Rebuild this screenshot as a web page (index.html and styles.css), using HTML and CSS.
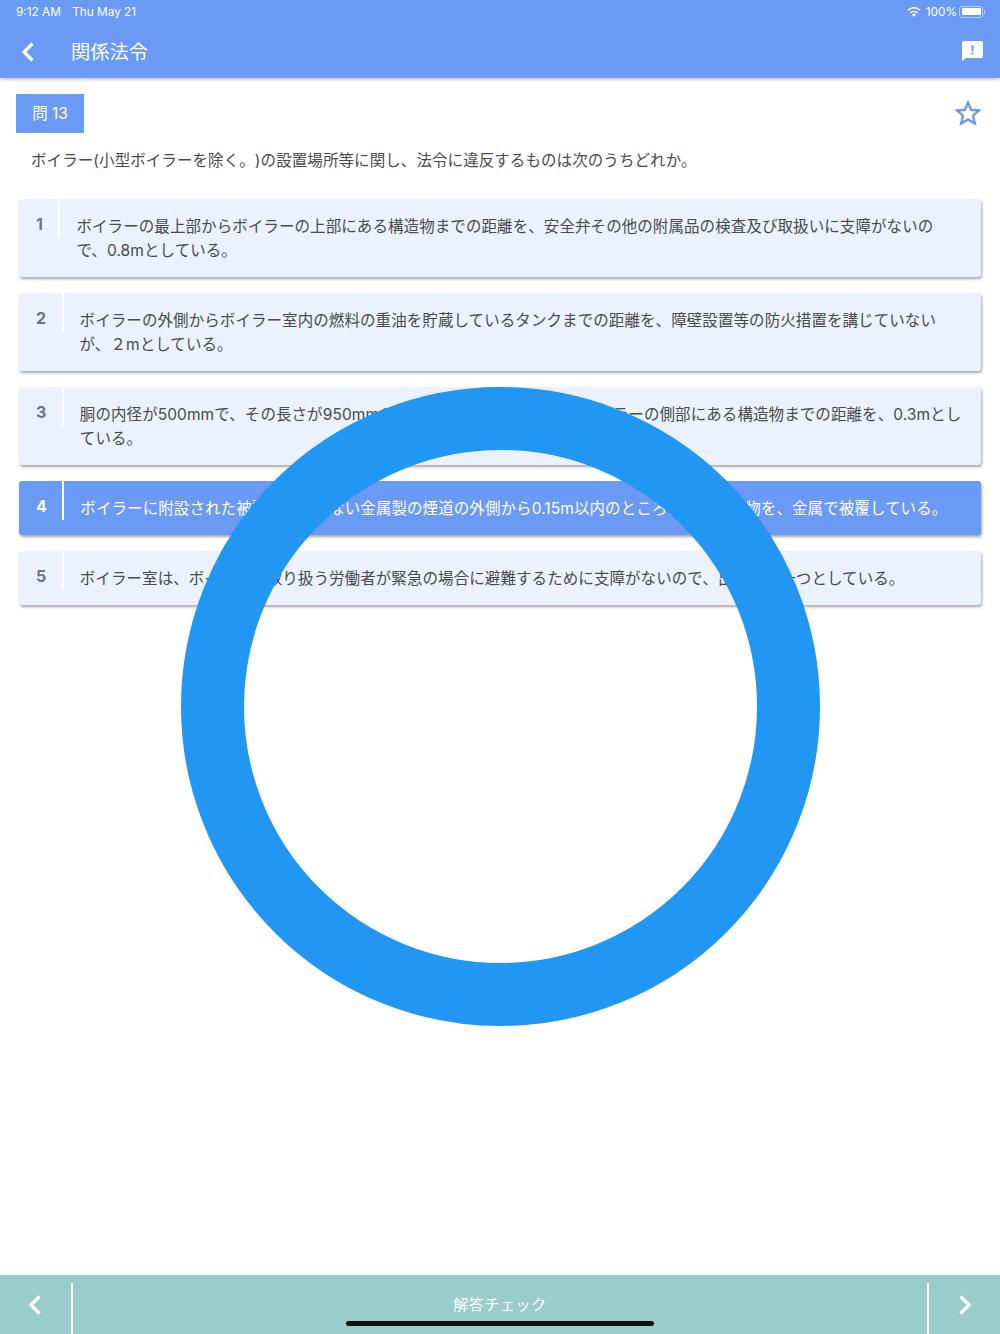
FILE: index.html
```html
<!DOCTYPE html>
<html lang="ja">
<head>
    <meta charset="UTF-8">
    <meta name="viewport" content="width=device-width, initial-scale=1.0">
    <title>関係法令</title>
    <link rel="stylesheet" href="styles.css">
</head>
<body>

    <header class="app-header">
        <div class="status-bar">
            <div class="status-left">
                <span>9:12 AM</span>
                <span>Thu May 21</span>
            </div>
            <div class="status-right">
                <svg class="wifi-icon" viewBox="0 0 14 11" width="14" height="11">
                    <path d="M7 11 4.9 8.6a3 3 0 0 1 4.2 0z" fill="#fff"/>
                    <path d="M3.4 6.9a5.2 5.2 0 0 1 7.2 0M1 4.3a8.6 8.6 0 0 1 12 0" fill="none" stroke="#fff" stroke-width="1.5"/>
                </svg>
                <span>100%</span>
                <div class="battery"><div class="battery-level"></div></div>
                <div class="battery-tip"></div>
            </div>
        </div>
        <div class="nav-bar">
            <svg class="nav-back" viewBox="0 0 14 20" width="14" height="20">
                <path d="M11.5 1.5 3 10l8.5 8.500" fill="none" stroke="#fff" stroke-width="3.2"/>
            </svg>
            <div class="nav-title">関係法令</div>
            <svg class="nav-report" viewBox="0 0 21 20" width="21" height="20">
                <path d="M2 0h17a2 2 0 0 1 2 2v13a2 2 0 0 1-2 2H4l-4 3V2a2 2 0 0 1 2-2z" fill="#fff"/>
                <rect x="9.500" y="4" width="2" height="6" fill="#6a9af3"/>
                <rect x="9.500" y="11.500" width="2" height="2" fill="#6a9af3"/>
            </svg>
        </div>
    </header>

    <main class="content">
        <div class="question-top">
            <div class="question-tag">問 13</div>
            <svg class="star-icon" viewBox="0 0 26 26" width="26" height="26">
                <path d="M13 2.500l3.100 7.300 7.900.7-6 5.200 1.800 7.800L13 19.400l-6.800 4.100L8 15.700l-6-5.200 7.900-.7z" fill="none" stroke="#6a9af3" stroke-width="2.400"/>
            </svg>
        </div>
        <p class="question-text">ボイラー(小型ボイラーを除く。)の設置場所等に関し、法令に違反するものは次のうちどれか。</p>

        <div class="choices">
            <div class="choice">
                <div class="choice-num">1</div>
                <div class="choice-text">ボイラーの最上部からボイラーの上部にある構造物までの距離を、安全弁その他の附属品の検査及び取扱いに支障がないので、0.8mとしている。</div>
            </div>
            <div class="choice">
                <div class="choice-num">2</div>
                <div class="choice-text">ボイラーの外側からボイラー室内の燃料の重油を貯蔵しているタンクまでの距離を、障壁設置等の防火措置を講じていないが、２mとしている。</div>
            </div>
            <div class="choice">
                <div class="choice-num">3</div>
                <div class="choice-text">胴の内径が500mmで、その長さが950mmの立てボイラーの外壁面からボイラーの側部にある構造物までの距離を、0.3mとしている。</div>
            </div>
            <div class="choice selected">
                <div class="choice-num">4</div>
                <div class="choice-text">ボイラーに附設された被覆されていない金属製の煙道の外側から0.15m以内のところにある可燃物を、金属で被覆している。</div>
            </div>
            <div class="choice">
                <div class="choice-num">5</div>
                <div class="choice-text">ボイラー室は、ボイラーを取り扱う労働者が緊急の場合に避難するために支障がないので、出入口を一つとしている。</div>
            </div>
        </div>
    </main>

    <footer class="bottom-bar">
        <div class="bottom-btn bottom-prev">
            <svg viewBox="0 0 14 20" width="14" height="20">
                <path d="M11.5 1.500 3 10l8.500 8.500" fill="none" stroke="#fff" stroke-width="3.200"/>
            </svg>
        </div>
        <div class="bottom-check">解答チェック</div>
        <div class="bottom-btn bottom-next">
            <svg viewBox="0 0 14 20" width="14" height="20">
                <path d="M2.500 1.500 11 10l-8.500 8.500" fill="none" stroke="#fff" stroke-width="3.200"/>
            </svg>
        </div>
    </footer>

    <!-- Answer result mark -->
    <div class="result-circle"></div>
    <div class="home-indicator"></div>

</body>
</html>
```

FILE: styles.css
```css
html, body {
    height: 100%;
}
body {
    margin: 0;
    display: flex;
    flex-direction: column;
    height: 1334px;
    overflow: hidden;
    background-color: #fff;
    color: #4a4a4a;
    font-family: Inter, "Noto Sans CJK JP", sans-serif;
    text-spacing-trim: space-all;
}

/* Header */
.app-header {
    height: 78px;
    flex: none;
    background-color: #6a9af3;
    color: #fff;
    box-shadow: 0 1px 4px rgba(0, 0, 0, 0.3);
    position: relative;
}
.status-bar {
    height: 23px;
    display: flex;
    justify-content: space-between;
    align-items: center;
    padding: 0 15px 0 16px;
    font-size: 11.8px;
}
.status-left span {
    margin-right: 8px;
}
.status-right {
    display: flex;
    align-items: center;
}
.wifi-icon {
    margin-right: 5px;
}
.battery {
    width: 24px;
    height: 12px;
    margin-left: 2px;
    padding: 1.5px;
    box-sizing: border-box;
    border: 1px solid rgba(255, 255, 255, 0.5);
    border-radius: 3px;
}
.battery-level {
    height: 100%;
    background-color: #fff;
    border-radius: 1px;
}
.battery-tip {
    width: 1px;
    height: 4px;
    margin-left: 1px;
    background-color: rgba(255, 255, 255, 0.5);
}
.nav-bar {
    height: 55px;
    box-sizing: border-box;
    padding: 2px 17px 0 21px;
    display: flex;
    align-items: center;
}
.nav-title {
    flex: 1;
    margin-left: 36px;
    font-size: 19.3px;
    margin-top: -1px;
}
.nav-report {
    margin-top: -2px;
}

/* Question */
.content {
    flex: 1;
    padding: 16px 19px 0 16px;
}
.question-top {
    display: flex;
    justify-content: space-between;
    align-items: center;
}
.question-tag {
    width: 68px;
    height: 39px;
    line-height: 39px;
    text-align: center;
    background-color: #6a9af3;
    color: #fff;
    font-size: 15.5px;
}
.star-icon {
    margin: -2px 0 0 0;
}
.question-text {
    margin: 16px 0 26px 15px;
    font-size: 15.5px;
    line-height: 24px;
    letter-spacing: 0.08px;
}

/* Choices */
.choices {
    display: flex;
    flex-direction: column;
    gap: 16px;
    margin-left: 3px;
}
.choice {
    display: flex;
    align-items: flex-start;
    background-color: #ebf1fe;
    border-radius: 3px;
    box-shadow: 1px 2px 3px rgba(0, 0, 0, 0.35);
}
.choice-num {
    height: 25px;
    padding: 14px 15.5px 0 17px;
    border-right: 2px solid #fff;
    line-height: 22px;
    font-size: 16px;
    font-weight: 700;
    color: #6e7580;
}
.choice-text {
    flex: 1;
    padding: 16px 19px 14px 16px;
    font-size: 15.5px;
    line-height: 24px;
    letter-spacing: 0.08px;
}
.choice.selected {
    background-color: #6a9af3;
}
.choice.selected .choice-num,
.choice.selected .choice-text {
    color: #fff;
}

/* Bottom bar */
.bottom-bar {
    height: 59px;
    flex: none;
    display: flex;
    background-color: #9acccc;
    color: #fff;
}
.bottom-btn {
    width: 73px;
    height: 51px;
    margin-top: 8px;
    display: flex;
    align-items: center;
    justify-content: center;
    padding-bottom: 8px;
    box-sizing: border-box;
}
.bottom-prev {
    border-right: 2px solid #fff;
    padding-right: 2px;
}
.bottom-next {
    border-left: 2px solid #fff;
}
.bottom-check {
    flex: 1;
    text-align: center;
    font-size: 15px;
    line-height: 60px;
    letter-spacing: 0.6px;
}

/* Overlays */
.result-circle {
    position: absolute;
    left: 181px;
    top: 387px;
    width: 639px;
    height: 639px;
    box-sizing: border-box;
    border: 63px solid #2196f3;
    border-radius: 50%;
}
.home-indicator {
    position: absolute;
    left: 346px;
    top: 1321px;
    width: 308px;
    height: 5px;
    border-radius: 3px;
    background-color: #111;
}
```
